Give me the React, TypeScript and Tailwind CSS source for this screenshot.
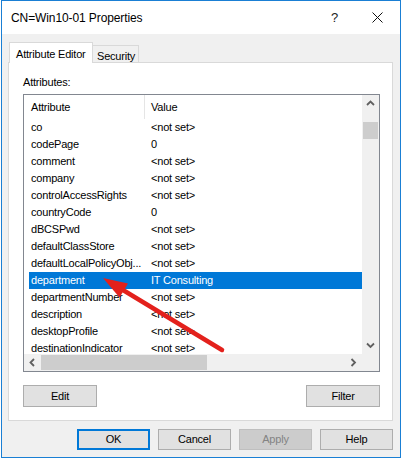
import React from "react";

type Row = { name: string; value: string; selected?: boolean };

const rows: Row[] = [
  { name: "co", value: "<not set>" },
  { name: "codePage", value: "0" },
  { name: "comment", value: "<not set>" },
  { name: "company", value: "<not set>" },
  { name: "controlAccessRights", value: "<not set>" },
  { name: "countryCode", value: "0" },
  { name: "dBCSPwd", value: "<not set>" },
  { name: "defaultClassStore", value: "<not set>" },
  { name: "defaultLocalPolicyObj...", value: "<not set>" },
  { name: "department", value: "IT Consulting", selected: true },
  { name: "departmentNumber", value: "<not set>" },
  { name: "description", value: "<not set>" },
  { name: "desktopProfile", value: "<not set>" },
  { name: "destinationIndicator", value: "<not set>" },
];

// small scrollbar arrow
const Chevron = ({ dir }: { dir: "up" | "down" | "left" | "right" }) => {
  const d = {
    up: "M1 5 L4.5 1.5 L8 5",
    down: "M1 1.5 L4.5 5 L8 1.5",
    left: "M5 1 L1.5 4.5 L5 8",
    right: "M1.5 1 L5 4.5 L1.5 8",
  }[dir];
  const vertical = dir === "up" || dir === "down";
  return (
    <svg
      width={vertical ? 9 : 7}
      height={vertical ? 7 : 9}
      viewBox={vertical ? "0 0 9 7" : "0 0 7 9"}
    >
      <path d={d} fill="none" stroke="#606060" strokeWidth="1.8" />
    </svg>
  );
};

const Button = ({
  label,
  className = "",
}: {
  label: string;
  className?: string;
}) => (
  <div
    className={
      "flex items-center justify-center bg-[#e1e1e1] border border-[#adadad] " +
      className
    }
  >
    {label}
  </div>
);

export default function App() {
  return (
    <div className="relative w-[405px] h-[461px] bg-white font-['Liberation_Sans',Arial,sans-serif] text-[11px] tracking-[-0.2px] text-black">
      <div className="ml-[1px] w-[400px] h-[458px] border border-[#1a7fd4] flex flex-col">
        {/* title bar */}
        <div className="h-[33px] bg-white flex items-center pl-[9px] pr-[17px]">
          <span className="text-[12px] tracking-[-0.1px] flex-1">
            CN=Win10-01 Properties
          </span>
          <span className="text-[13px] mr-[34px] text-[#222]">?</span>
          <svg width="11" height="11" viewBox="0 0 11 11">
            <path d="M0.5 0.5 L10.5 10.5 M10.5 0.5 L0.5 10.5" stroke="#111" strokeWidth="1" />
          </svg>
        </div>

        {/* body */}
        <div className="flex-1 bg-[#f0f0f0] flex flex-col pt-[8px] pl-[6px] pr-[7px]">
          {/* tabs */}
          <div className="h-[20px] flex items-end pl-[1px]">
            <div className="relative z-10 h-[21px] -mb-px bg-white border-t border-l border-r border-[#d9d9d9] pl-[6px] pr-[6px] pt-[3px] w-[84px]">
              Attribute Editor
            </div>
            <div className="h-[17px] border-t border-r border-[#d9d9d9] bg-[#f0f0f0] pl-[4px] pr-[4px] pt-[2px] w-[46px]">
              Security
            </div>
          </div>

          {/* tab panel */}
          <div className="h-[359px] bg-white border border-[#d9d9d9] pl-[14px] pr-[12px] pt-[12px] flex flex-col">
            <div className="h-[14px] leading-[14px]">Attributes:</div>

            {/* list */}
            <div className="mt-[5px] w-[357px] h-[278px] border border-[#828790] flex flex-col">
              <div className="h-[259px] flex">
                <div className="flex-1 overflow-hidden">
                  <div className="h-[24px] flex items-center">
                    <div className="w-[121px] pl-[7px] h-full flex items-center border-r border-[#e5e5e5]">
                      Attribute
                    </div>
                    <div className="pl-[6px]">Value</div>
                  </div>
                  {rows.map((r) => (
                    <div
                      key={r.name}
                      className={
                        "h-[17px] ml-[5px] flex items-center " +
                        (r.selected ? "bg-[#0078d7] text-white" : "")
                      }
                    >
                      <div className="w-[122px] pl-[2px] whitespace-nowrap">
                        {r.name}
                      </div>
                      <div className="whitespace-nowrap">{r.value}</div>
                    </div>
                  ))}
                </div>
                {/* vertical scrollbar */}
                <div className="w-[17px] bg-[#f0f0f0] flex flex-col">
                  <div className="h-[17px] flex items-center justify-center">
                    <Chevron dir="up" />
                  </div>
                  <div className="mt-[10px] h-[17px] mx-[1px] bg-[#cdcdcd]" />
                  <div className="flex-1" />
                  <div className="h-[17px] flex items-center justify-center">
                    <Chevron dir="down" />
                  </div>
                </div>
              </div>
              {/* horizontal scrollbar */}
              <div className="h-[17px] bg-[#f0f0f0] flex items-center">
                <div className="w-[17px] h-full flex items-center justify-center">
                  <Chevron dir="left" />
                </div>
                <div className="w-[166px] h-[15px] bg-[#cdcdcd]" />
                <div className="flex-1" />
                <div className="w-[17px] h-full flex items-center justify-center">
                  <Chevron dir="right" />
                </div>
                <div className="w-[17px]" />
              </div>
            </div>

            <div className="mt-[13px] flex justify-between w-[357px]">
              <Button label="Edit" className="w-[74px] h-[22px]" />
              <Button label="Filter" className="w-[74px] h-[22px]" />
            </div>
          </div>

          {/* dialog buttons */}
          <div className="mt-[8px] flex justify-end gap-[8px]">
            <div className="w-[73px] h-[21px] flex items-center justify-center bg-[#e1e1e1] border-2 border-[#0078d7]">
              OK
            </div>
            <Button label="Cancel" className="w-[73px] h-[21px]" />
            <div className="w-[73px] h-[21px] flex items-center justify-center bg-[#cccccc] border border-[#bfbfbf] text-[#838383]">
              Apply
            </div>
            <Button label="Help" className="w-[73px] h-[21px]" />
          </div>
        </div>
      </div>

      {/* red annotation arrow */}
      <svg
        className="absolute left-0 top-0 pointer-events-none"
        width="405"
        height="461"
        viewBox="0 0 405 461"
      >
        <line
          x1="222"
          y1="350"
          x2="118"
          y2="287"
          stroke="#e3211c"
          strokeWidth="4.5"
          strokeLinecap="round"
        />
        <polygon points="103,278 128,283.5 119.5,297.5" fill="#e3211c" />
      </svg>
    </div>
  );
}
